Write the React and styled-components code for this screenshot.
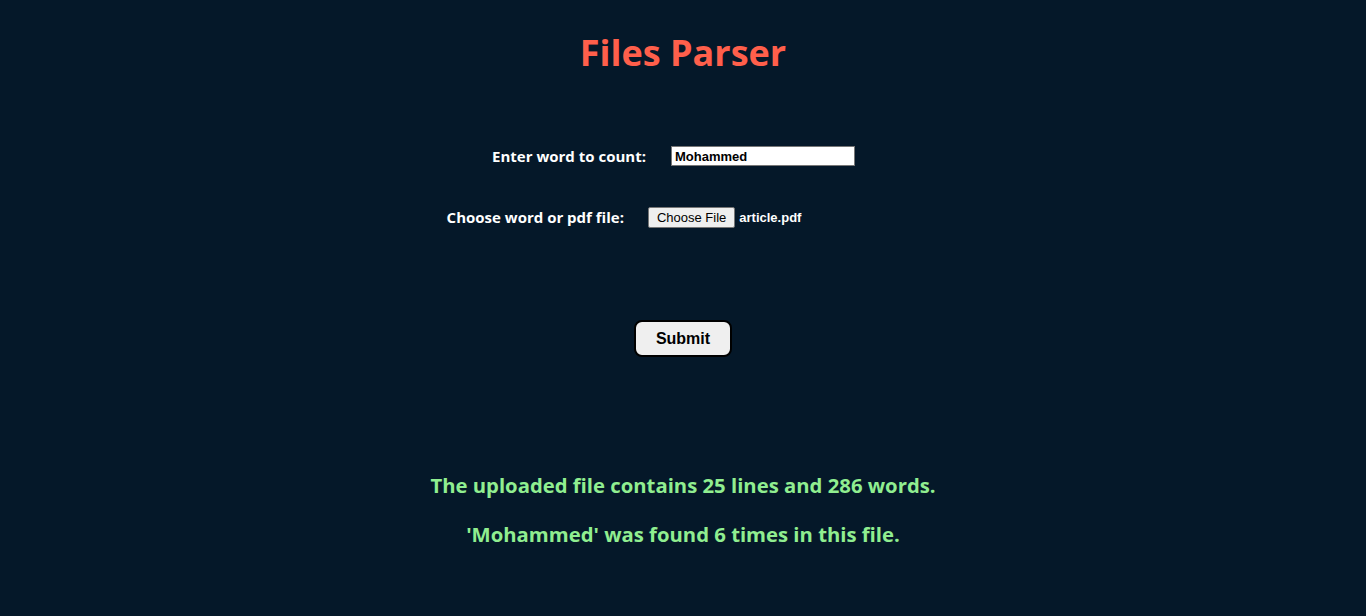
import React, { useState } from 'react'
import styled, { createGlobalStyle } from 'styled-components'

const GlobalStyle = createGlobalStyle`
  html, body {
    margin: 0;
    padding: 0;
    background-color: #051829;
  }
  body {
    font-family: "Open Sans", "Noto Sans", sans-serif;
  }
`;

const App = () => {
  const [word, setWord] = useState('Mohammed');

  return (
    <Wrapper>
      <GlobalStyle />
      <h1 className="title">Files Parser</h1>
      <form className="form" onSubmit={e => e.preventDefault()}>
        <div className="row word-row">
          <label htmlFor="word">Enter word to count:</label>
          <input
            id="word"
            type="text"
            className="word-input"
            value={word}
            onChange={e => setWord(e.target.value)}
          />
        </div>
        <div className="row file-row">
          <label>Choose word or pdf file:</label>
          <div className="file-input">
            <button type="button" className="file-btn">Choose File</button>
            <span className="file-name">article.pdf</span>
          </div>
        </div>
        <div className="submit-row">
          <button type="submit" className="submit-btn">Submit</button>
        </div>
      </form>
      <div className="results">
        <p>The uploaded file contains 25 lines and 286 words.</p>
        <p>'{word}' was found 6 times in this file.</p>
      </div>
    </Wrapper>
  )
}

const Wrapper = styled.div`
  width: 1366px;
  height: 616px;
  display: flex;
  flex-direction: column;
  align-items: center;
  background-color: #051829;
  color: #fff;

  .title {
    margin: 28px 0 0;
    font-size: 36px;
    line-height: 50px;
    font-weight: 700;
    color: #ff5f4b;
  }

  .form {
    display: flex;
    flex-direction: column;
    align-items: center;
    margin-top: 67px;
  }

  .row {
    display: flex;
    align-items: center;
    label {
      font-size: 15px;
      font-weight: 700;
    }
  }

  .word-row {
    height: 22px;
    margin-left: -19px;
    label {
      margin-right: 25px;
    }
  }

  .word-input {
    width: 184px;
    height: 20px;
    box-sizing: border-box;
    border: 1px solid #767676;
    padding: 1px 3px;
    font-family: "Liberation Sans", Arial, sans-serif;
    font-size: 13px;
    font-weight: 700;
    color: #000;
    background: #fff;
    outline: none;
  }

  .file-row {
    height: 22px;
    margin-top: 39px;
    margin-left: -118px;
    label {
      margin-right: 24px;
    }
  }

  .file-input {
    display: flex;
    align-items: center;
    gap: 4px;
  }

  .file-btn {
    height: 21px;
    padding: 0 8px;
    font-family: "Liberation Sans", Arial, sans-serif;
    font-size: 13px;
    color: #000;
    background: #efefef;
    border: 1px solid #767676;
    border-radius: 2px;
  }

  .file-name {
    font-family: "Liberation Sans", Arial, sans-serif;
    font-size: 13px;
    font-weight: 700;
    color: #fff;
  }

  .submit-row {
    margin-top: 92px;
  }

  .submit-btn {
    width: 98px;
    height: 37px;
    box-sizing: border-box;
    border: 2px solid #000;
    border-radius: 8px;
    background: #efefef;
    font-family: "Liberation Sans", Arial, sans-serif;
    font-size: 16px;
    font-weight: 700;
    color: #000;
    cursor: pointer;
  }

  .results {
    margin-top: 115px;
    display: flex;
    flex-direction: column;
    align-items: center;
    gap: 22px;
    p {
      margin: 0;
      font-size: 20.3px;
      line-height: 27px;
      font-weight: 700;
      color: #90ee90;
    }
  }
`;

export default App
